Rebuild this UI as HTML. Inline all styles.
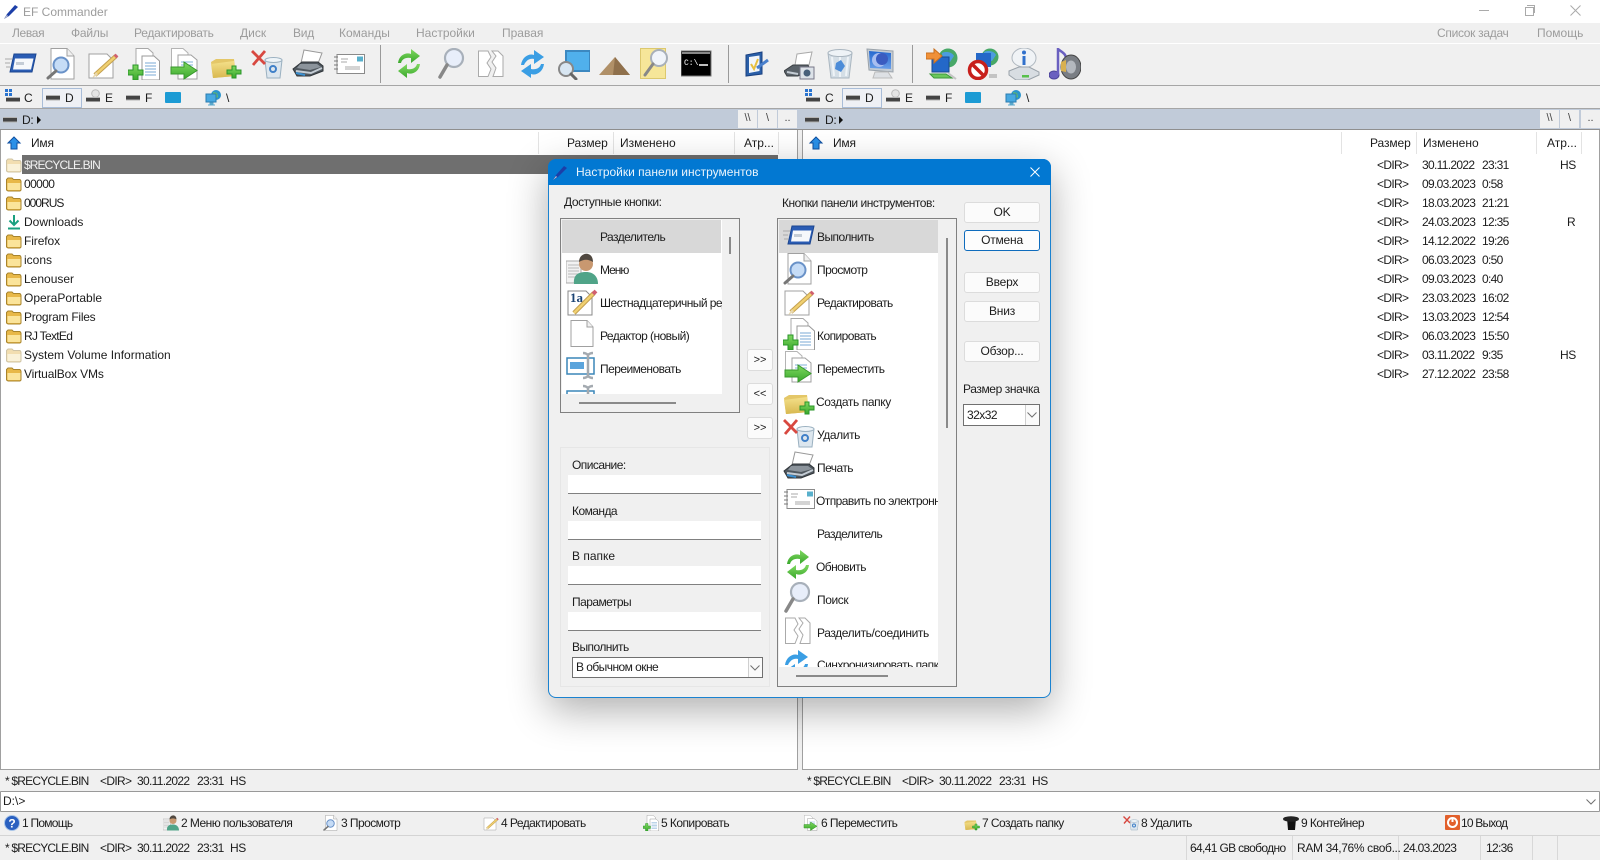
<!DOCTYPE html>
<html lang="ru"><head><meta charset="utf-8"><title>EF Commander</title>
<style>
html,body{margin:0;padding:0;background:#f0f0f0}
#r{position:relative;width:1600px;height:860px;overflow:hidden;background:#f0f0f0;font:12px/16px "Liberation Sans","Noto Sans CJK SC",sans-serif;color:#1c1c1c;filter:blur(.35px)}
.b{position:absolute}
.t{position:absolute;white-space:nowrap;line-height:16px}
svg.i{position:absolute;width:32px;height:32px;overflow:visible}
svg.s{position:absolute;width:16px;height:16px;overflow:visible}
.g{color:#9c9c9c}
.m{letter-spacing:-.55px}
.q{letter-spacing:-.68px}
.pb{position:absolute;top:110px;height:18px;background:#f0f0f0;text-align:center;line-height:17px;font-size:11px;color:#444}
.btn{position:absolute;left:964px;width:74px;height:19px;background:#fbfbfb;border:1px solid #dcdcdc;border-radius:3px;text-align:center;line-height:19px;letter-spacing:-.2px}
.ab{position:absolute;left:747px;width:24px;height:20px;background:#fbfbfb;border:1px solid #dcdcdc;border-radius:3px;text-align:center;line-height:21px;font-size:11px}
.in{position:absolute;left:568px;width:193px;height:18px;background:#fff;border-bottom:1px solid #808080}
.sep{position:absolute;top:132px;height:22px;width:1px;background:#e3e3e3}
</style></head><body>
<svg width="0" height="0" style="position:absolute">
<defs>
<linearGradient id="gr" x1="0" y1="0" x2="0" y2="1"><stop offset="0" stop-color="#7fd860"/><stop offset="1" stop-color="#3aa82c"/></linearGradient>
<linearGradient id="bl" x1="0" y1="0" x2="0" y2="1"><stop offset="0" stop-color="#2468d0"/><stop offset="1" stop-color="#6a9ee8"/></linearGradient>
<linearGradient id="gy" x1="0" y1="0" x2="0" y2="1"><stop offset="0" stop-color="#f4e08a"/><stop offset="1" stop-color="#d8b850"/></linearGradient>
<symbol id="run" viewBox="0 0 32 32"><path d="M0 11h7M0 15h5M1 19h4" stroke="#aaa" fill="none"/><path d="M9 6H31L27 24H5Z" fill="#2a5cb4" stroke="#1c4690"/><path d="M10 10.500h18.500l-2.500 11H8z" fill="#f6f8fb"/><path d="M11 14h8v3h-8z" fill="#c4ccd6"/></symbol>
<symbol id="view" viewBox="0 0 32 32"><path d="M5 .5H21L28 8V31H5Z" fill="#fff" stroke="#a0a0a0"/><path d="M21 .5V8H28" fill="#f0f0f0" stroke="#a0a0a0"/><circle cx="15" cy="17" r="7.500" fill="#c6dcf6" stroke="#6a92c8" stroke-width="2"/><path d="M10 23L2 30" stroke="#777" stroke-width="3" stroke-linecap="round"/></symbol>
<symbol id="edit" viewBox="0 0 32 32"><path d="M2 6H20L26 12V30H2Z" fill="#fff" stroke="#a0a0a0"/><path d="M8 27L29 8" stroke="#c4a050" stroke-width="4.500"/><path d="M8 27L29 8" stroke="#f0d070" stroke-width="2.500"/><path d="M9 24L11 27L5 30Z" fill="#e8d8b0"/><path d="M28 9L30 7" stroke="#d06070" stroke-width="4"/></symbol>
<symbol id="copy" viewBox="0 0 32 32"><path d="M8 .5H20L25 5V26H8Z" fill="#fff" stroke="#a8a8a8"/><path d="M14 8H26L31.500 13V32H14Z" fill="#fff" stroke="#999"/><path d="M17 15h11M17 18h11M17 21h11M17 24h11M17 27h11" stroke="#7aa8d4"/><path d="M5 17h5v5h5v5h-5v5H5v-5H0v-5h5z" fill="url(#gr)" stroke="#2a962a"/></symbol>
<symbol id="move" viewBox="0 0 32 32"><path d="M2.500 .5H14L19 5V24H2.500Z" fill="#fff" stroke="#b4b4b4"/><path d="M9 7H22L28 12V31H9Z" fill="#fff" stroke="#a0a0a0"/><path d="M12 14h12M12 17h12" stroke="#80b0d8"/><path d="M2 19H15V14L28 22.500L15 31V26H2Z" fill="url(#gr)" stroke="#38982c"/></symbol>
<symbol id="nf" viewBox="0 0 32 32"><path d="M1 14L6 11H24L26 28L3 30Z" fill="#e4c768"/><path d="M1 16L24 13L26 28L3 30Z" fill="url(#gy)"/><path d="M22 18h4v4h5v4h-5v4h-4v-4h-5v-4h5z" fill="url(#gr)" stroke="#2a962a"/></symbol>
<symbol id="del" viewBox="0 0 32 32"><path d="M14 12H31L29 30H16Z" fill="#dce6ee" stroke="#9ab0c0"/><ellipse cx="22.500" cy="12" rx="8.500" ry="2.500" fill="#eef4f8" stroke="#9ab0c0"/><circle cx="22" cy="21" r="3" fill="none" stroke="#4080c8" stroke-width="2"/><path d="M1 3L14 16M14 3L2 17" stroke="#d84840" stroke-width="2.800"/></symbol>
<symbol id="print" viewBox="0 0 32 32"><path d="M12 2L30 5L25 18L9 15Z" fill="#fff" stroke="#999"/><path d="M1 21L10 14H26L31 18V23L18 28H5Z" fill="#50585f" stroke="#303539"/><path d="M8 16H25L29 19L18 22L5 20Z" fill="#8c949c"/><path d="M4 23L19 25L30 20" stroke="#c4ccd4" fill="none" stroke-width="2"/><path d="M4 25L13 27" stroke="#3a8fd0" stroke-width="2"/></symbol>
<symbol id="mail" viewBox="0 0 32 32"><path d="M4 6.500h27.500v19H4z" fill="#fff" stroke="#8a8a8a"/><path d="M24 8.500h6v5h-6z" fill="#58b0cc"/><path d="M8 11h7M8 14h6M12 19h15M12 21h15" stroke="#aaa"/><path d="M1 9h4M1 13h4M1 17h4M1 21h4" stroke="#777"/></symbol>
<symbol id="ref" viewBox="0 0 32 32"><path d="M2 15C3 7 10 4 15 6V1L24 8L15 15V10C10 9 6 11 5 15Z" fill="url(#gr)"/><path d="M24 16C23 24 16 27 11 25V30L2 23L11 16V21C16 22 20 20 21 16Z" fill="url(#gr)"/></symbol>
<symbol id="sync" viewBox="0 0 32 32"><path d="M2 17C3 9 10 5 15 7V2L25 9L15 16V11C10 10 7 13 5 17Z" fill="#3a9ee4"/><path d="M25 16C24 24 17 28 12 26V30L2 23L12 16V21C17 22 21 20 22 16Z" fill="#3a9ee4"/></symbol>
<symbol id="find" viewBox="0 0 32 32"><circle cx="17" cy="10" r="9" fill="#e8eefa" stroke="#a8b0ba" stroke-width="2.200"/><path d="M10 17L3 29" stroke="#888" stroke-width="3.500" stroke-linecap="round"/></symbol>
<symbol id="split" viewBox="0 0 32 32"><path d="M.5 3H10L13 9L9 15L13 21L10 28.500H.5Z" fill="#fff" stroke="#aaa"/><path d="M14 3H20L25 8V28.500H15L18 20L14 14L18 8Z" fill="#fff" stroke="#aaa"/></symbol>
<symbol id="cmp" viewBox="0 0 32 32"><rect x="8" y="3" width="24" height="20" fill="#50b0ec" stroke="#3c88c0" stroke-width="2"/><circle cx="8" cy="21" r="7" fill="#d8e6f2" stroke="#888" stroke-width="2"/><path d="M13 26L18 31" stroke="#666" stroke-width="3" stroke-linecap="round"/></symbol>
<symbol id="pyr" viewBox="0 0 32 32"><path d="M16 9L31 27H0Z" fill="#b09068"/><path d="M16 9L31 27H14Z" fill="#8f704c"/></symbol>
<symbol id="ff" viewBox="0 0 32 32"><rect x=".5" y=".5" width="25" height="30" fill="#f6e699" stroke="#dcc86e"/><circle cx="19" cy="10" r="8" fill="#f0f4fa" stroke="#a8b0ba" stroke-width="2"/><path d="M13 16L5 27" stroke="#888" stroke-width="3" stroke-linecap="round"/></symbol>
<symbol id="cm" viewBox="0 0 32 32"><rect x="0" y="3" width="30" height="25" fill="#000" stroke="#777"/><path d="M1 5h28" stroke="#888" stroke-width="2"/><text x="3" y="17" font-family="Liberation Mono,monospace" font-size="8" fill="#fff">C:\</text><path d="M18 17h9" stroke="#fff" stroke-width="1.500"/></symbol>
<symbol id="task" viewBox="0 0 32 32"><path d="M3 7L19 4V26L3 28Z" fill="#2a5fa8" stroke="#1a4080"/><path d="M6 9L16.500 7.500V23L6 25Z" fill="#f2f6fb"/><path d="M8 16L11 21L15 11" stroke="#e8c040" stroke-width="2" fill="none"/><path d="M14 20L25 12" stroke="#4a80cc" stroke-width="3"/></symbol>
<symbol id="pc" viewBox="0 0 32 32"><path d="M13 6L28 4L25 17L11 17Z" fill="#fff" stroke="#aaa"/><path d="M0 23L9 17H24L26 22L14 28H3Z" fill="#5a6269" stroke="#3a3f43"/><path d="M3 24L14 26" stroke="#c4ccd4" stroke-width="2"/><rect x="16" y="19" width="14" height="12" fill="#dce2e8" stroke="#778"/><circle cx="23" cy="25" r="3.500" fill="#48607a"/></symbol>
<symbol id="rec" viewBox="0 0 32 32"><path d="M3 5H27L24 30H6Z" fill="#d4dee6" stroke="#aab6c0"/><ellipse cx="15" cy="5" rx="12" ry="3.500" fill="#eef3f7" stroke="#aab6c0"/><path d="M7 9L9 28M15 9V29M23 9L21 28" stroke="#eef3f7" stroke-width="2"/><path d="M11 15L16 12L20 18L16 24L10 21Z" fill="#4c8cd8"/></symbol>
<symbol id="mon" viewBox="0 0 32 32"><path d="M1 1L27 3V24L3 22Z" fill="#c4ccd4" stroke="#9aa2aa"/><path d="M3 3L25 5V21L4 20Z" fill="url(#bl)"/><circle cx="13" cy="12" r="7" fill="#a8bef0"/><circle cx="16" cy="11" r="6" fill="#3a5cc0"/><path d="M9 24H22L26 30H7Z" fill="#dde0e4" stroke="#bbb"/></symbol>
<symbol id="net1" viewBox="0 0 32 32"><circle cx="22" cy="10" r="9.500" fill="#48a868"/><path d="M16 5C20 3 26 4 28 8L24 14L17 13Z" fill="#4c9ce0"/><rect x="6" y="9" width="17" height="15" fill="#2468c8" stroke="#184a90"/><path d="M0 5H8V1L16 8L8 15V11H0Z" fill="#f09038" stroke="#c87020"/><path d="M4 26H20L26 30H8Z" fill="#6cc85c" stroke="#3c983c"/><path d="M22 25L30 31" stroke="#c4c4c4" stroke-width="2"/></symbol>
<symbol id="nonet" viewBox="0 0 32 32"><circle cx="23" cy="9" r="8.500" fill="#48a868"/><path d="M17 4C21 2 27 3 29 7L25 13L18 12Z" fill="#4c9ce0"/><rect x="9" y="5" width="15" height="14" fill="#2468c8"/><circle cx="11" cy="22" r="8.500" fill="#fff" stroke="#c8201c" stroke-width="3.500"/><path d="M5 16L17 28" stroke="#c8201c" stroke-width="3.500"/><path d="M22 26h8v4h-8z" fill="#c4c4c4"/></symbol>
<symbol id="info" viewBox="0 0 32 32"><path d="M16 0C22 0 28 4 28 10C28 16 22 19 20 19L16 24L14 19C9 18 4 15 4 10C4 4 10 0 16 0Z" fill="#f0f3f6" stroke="#b0b8c0"/><circle cx="16" cy="4.500" r="2" fill="#3070cc"/><path d="M16 8v9" stroke="#3070cc" stroke-width="3"/><path d="M1 23L11 19H21L31 24V27L20 32H8L1 27Z" fill="#d8dde2" stroke="#9aa2aa"/><rect x="14" y="27" width="7" height="2.500" fill="#58c04c"/></symbol>
<symbol id="mus" viewBox="0 0 32 32"><ellipse cx="5" cy="27" rx="5" ry="4" fill="#6a60c0" stroke="#4a4298"/><path d="M9 27V1C12 4 18 5 17 13" fill="none" stroke="#6a60c0" stroke-width="2.500"/><ellipse cx="22" cy="19" rx="10" ry="12" fill="#7a7e84" stroke="#444"/><ellipse cx="22" cy="19" rx="5" ry="6.500" fill="#b4b8be"/><path d="M12 14L17 12L17 24L12 23Z" fill="#d8b050"/></symbol>
<symbol id="usr" viewBox="0 0 32 32"><path d="M0 8H15V30H0Z" fill="#f2f2f2" stroke="#aaa"/><path d="M2 12h11M2 15h11M2 18h11M2 21h11M2 24h11" stroke="#bbb"/><path d="M8 31C7 22 12 19 20 19C28 19 32 24 32 31Z" fill="#50a488"/><circle cx="20" cy="11" r="7" fill="#c89870"/><path d="M13 9C13 3 18 0 22 1C26 2 27 6 27 9C22 6 18 6 13 9Z" fill="#504840"/></symbol>
<symbol id="hex" viewBox="0 0 32 32"><path d="M2 6H20L26 12V30H2Z" fill="#fff" stroke="#888"/><text x="4" y="17" font-family="Liberation Serif,serif" font-weight="700" font-size="13" fill="#1c4474">1a</text><path d="M8 28L28 8" stroke="#c4a050" stroke-width="4.500"/><path d="M8 28L28 8" stroke="#f0d070" stroke-width="2.500"/><path d="M27 9L30 6" stroke="#d06070" stroke-width="4"/></symbol>
<symbol id="nd" viewBox="0 0 32 32"><path d="M5 2.500H21L27 9V28.500H5Z" fill="#fff" stroke="#a0a0a0"/><path d="M21 2.500V9H27" fill="#f2f2f2" stroke="#a0a0a0"/></symbol>
<symbol id="ren" viewBox="0 0 32 32"><rect x="1" y="7" width="27" height="16" fill="#fff" stroke="#3a86b8" stroke-width="1.500"/><rect x="4" y="11" width="14" height="7" fill="#5aa4dc"/><path d="M17 2c3 0 4 1 5 2c1-1 2-2 5-2M22 3V26M17 27c3 0 4-1 5-2c1 1 2 2 5 2" stroke="#a4aab0" stroke-width="2.500" fill="none"/></symbol>
<symbol id="fo" viewBox="0 0 16 16"><path d="M.5 3.500L2 2H6L7.500 3.500H14L15 5V14L14 15H2L.5 14Z" fill="#e8b848" stroke="#a8842c"/><path d="M1.500 7H14.500V13.500L14 14H2L1.500 13.500Z" fill="#fbe49a"/></symbol>
<symbol id="fp" viewBox="0 0 16 16"><path d="M.5 3.500L2 2H6L7.500 3.500H14L15 5V14L14 15H2L.5 14Z" fill="#f2deb0" stroke="#cfc4a6"/><path d="M1.500 7H14.500V13.500L14 14H2L1.500 13.500Z" fill="#faf2d8"/></symbol>
<symbol id="dl" viewBox="0 0 16 16"><path d="M8 1V11M3.500 6.500L8 11L12.500 6.500" stroke="#1aa080" stroke-width="2" fill="none"/><path d="M2 14.500H14" stroke="#1aa080" stroke-width="2"/></symbol>
<symbol id="up" viewBox="0 0 16 16"><path d="M8 2L14 8H11V14H5V8H2Z" fill="#2a90e8" stroke="#0f4fa0"/></symbol>
<symbol id="d" viewBox="0 0 16 16"><rect x="1" y="7" width="14" height="3.500" fill="#444"/><path d="M1 6.500h14M1 11h14" stroke="#b4b4b4"/></symbol>
<symbol id="dc" viewBox="0 0 16 16"><rect x="1" y="9" width="14" height="3.500" fill="#444"/><path d="M1 8.500h14" stroke="#b4b4b4"/><path d="M0 0h3v3H0zM4 0h3v3H4zM0 4h3v3H0zM4 4h3v3H4z" fill="#2a74d0"/></symbol>
<symbol id="de" viewBox="0 0 16 16"><rect x="1" y="9" width="14" height="3.500" fill="#444"/><path d="M1 8.500h14" stroke="#b4b4b4"/><circle cx="10.500" cy="4.500" r="3.800" fill="#e4e4e4" stroke="#bbb"/></symbol>
<symbol id="nt" viewBox="0 0 16 16"><circle cx="11" cy="5" r="5" fill="#2a94cc"/><path d="M8 2l4 1l1 4l-3 2z" fill="#68c068"/><rect x="1" y="4" width="10" height="8" fill="#48a8e0" stroke="#2a7cb0"/><path d="M5 13h3v1H5zM3 15h7" stroke="#5aa8cc"/></symbol>
<symbol id="hl" viewBox="0 0 16 16"><circle cx="8" cy="8" r="7.500" fill="#2a60c0" stroke="#a8c4e8"/><text x="8" y="12.500" text-anchor="middle" font-family="Liberation Sans,sans-serif" font-weight="700" font-size="12" fill="#fff">?</text></symbol>
<symbol id="hat" viewBox="0 0 16 16"><path d="M4 3H13L12 15H5Z" fill="#111"/><ellipse cx="8" cy="4" rx="8" ry="2.800" fill="#222"/></symbol>
<symbol id="pw" viewBox="0 0 16 16"><rect width="15" height="15" rx="1" fill="#e2602c"/><circle cx="7.500" cy="7.500" r="4.500" fill="none" stroke="#fff" stroke-width="2"/><path d="M7.500 3v4" stroke="#fff" stroke-width="2"/></symbol>
<symbol id="pen" viewBox="0 0 16 16"><path d="M1 15L4 10L12 1L15 3L6 12Z" fill="#1c3fa8"/><path d="M1 15L4 11L5 12Z" fill="#c8c8d0"/></symbol>
<symbol id="chev" viewBox="0 0 10 6"><path d="M.5 .5L5 5L9.500 .5" fill="none" stroke="#707070"/></symbol>
</defs></svg>

<div id="r">
<!-- title -->
<div class="b" style="left:0;top:0;width:1600px;height:23px;background:#fff"></div>
<svg class="s" style="left:3px;top:4px"><use href="#pen"/></svg>
<div class="t g" style="left:23px;top:4px">EF Commander</div>
<div class="b" style="left:1479px;top:10px;width:10px;height:1px;background:#aaa"></div>
<div class="b" style="left:1525px;top:7px;width:7px;height:7px;border:1px solid #aaa"></div>
<div class="b" style="left:1527px;top:5px;width:7px;height:7px;border-top:1px solid #aaa;border-right:1px solid #aaa"></div>
<svg class="b" style="left:1570px;top:5px;width:11px;height:11px"><path d="M.5 .5L10.500 10.500M10.500 .5L.5 10.500" stroke="#aaa"/></svg>
<!-- menu -->
<div class="t g" style="left:12px;top:25px;letter-spacing:-.35px">Левая</div>
<div class="t g" style="left:71px;top:25px;letter-spacing:-.2px">Файлы</div>
<div class="t g" style="left:134px;top:25px;letter-spacing:-.25px">Редактировать</div>
<div class="t g" style="left:240px;top:25px">Диск</div>
<div class="t g" style="left:293px;top:25px;letter-spacing:-.2px">Вид</div>
<div class="t g" style="left:339px;top:25px">Команды</div>
<div class="t g" style="left:416px;top:25px">Настройки</div>
<div class="t g" style="left:502px;top:25px">Правая</div>
<div class="t g" style="left:1437px;top:25px;letter-spacing:-.3px">Список задач</div>
<div class="t g" style="left:1537px;top:25px">Помощь</div>
<div class="b" style="left:0;top:43px;width:1600px;height:1px;background:#fff"></div>
<div class="b" style="left:0;top:85px;width:1600px;height:1px;background:#a6a6a6"></div>
<div class="b" style="left:0;top:108px;width:1600px;height:1px;background:#a6a6a6"></div>
<!-- toolbar -->
<svg class="i" style="left:5px;top:48px"><use href="#run"/></svg>
<svg class="i" style="left:46px;top:48px"><use href="#view"/></svg>
<svg class="i" style="left:87px;top:48px"><use href="#edit"/></svg>
<svg class="i" style="left:128px;top:48px"><use href="#copy"/></svg>
<svg class="i" style="left:169px;top:48px"><use href="#move"/></svg>
<svg class="i" style="left:210px;top:48px"><use href="#nf"/></svg>
<svg class="i" style="left:251px;top:48px"><use href="#del"/></svg>
<svg class="i" style="left:292px;top:48px"><use href="#print"/></svg>
<svg class="i" style="left:333px;top:48px"><use href="#mail"/></svg>
<div class="b" style="left:380px;top:45px;width:1px;height:38px;background:#9a9a9a"></div>
<svg class="i" style="left:396px;top:48px"><use href="#ref"/></svg>
<svg class="i" style="left:437px;top:48px"><use href="#find"/></svg>
<svg class="i" style="left:478px;top:48px"><use href="#split"/></svg>
<svg class="i" style="left:519px;top:48px"><use href="#sync"/></svg>
<svg class="i" style="left:558px;top:48px"><use href="#cmp"/></svg>
<svg class="i" style="left:599px;top:48px"><use href="#pyr"/></svg>
<svg class="i" style="left:640px;top:48px"><use href="#ff"/></svg>
<svg class="i" style="left:681px;top:48px"><use href="#cm"/></svg>
<div class="b" style="left:728px;top:45px;width:1px;height:38px;background:#9a9a9a"></div>
<svg class="i" style="left:743px;top:48px"><use href="#task"/></svg>
<svg class="i" style="left:784px;top:48px"><use href="#pc"/></svg>
<svg class="i" style="left:825px;top:48px"><use href="#rec"/></svg>
<svg class="i" style="left:866px;top:48px"><use href="#mon"/></svg>
<div class="b" style="left:912px;top:45px;width:1px;height:38px;background:#9a9a9a"></div>
<svg class="i" style="left:926px;top:48px"><use href="#net1"/></svg>
<svg class="i" style="left:967px;top:48px"><use href="#nonet"/></svg>
<svg class="i" style="left:1008px;top:48px"><use href="#info"/></svg>
<svg class="i" style="left:1049px;top:48px"><use href="#mus"/></svg>
<!-- drives left -->
<svg class="s" style="left:5px;top:89px"><use href="#dc"/></svg><div class="t" style="left:24px;top:90px">C</div>
<div class="b" style="left:42px;top:88px;width:38px;height:18px;border:1px solid #a9bdd8;background:#eef0f5"></div>
<svg class="s" style="left:45px;top:89px"><use href="#d"/></svg><div class="t" style="left:65px;top:90px">D</div>
<svg class="s" style="left:85px;top:89px"><use href="#de"/></svg><div class="t" style="left:105px;top:90px">E</div>
<svg class="s" style="left:125px;top:89px"><use href="#d"/></svg><div class="t" style="left:145px;top:90px">F</div>
<div class="b" style="left:165px;top:92px;width:16px;height:11px;background:#1c9bd4;border-radius:1px"></div>
<svg class="s" style="left:205px;top:90px"><use href="#nt"/></svg><div class="t" style="left:226px;top:90px">\</div>
<!-- drives right -->
<svg class="s" style="left:805px;top:89px"><use href="#dc"/></svg><div class="t" style="left:825px;top:90px">C</div>
<div class="b" style="left:842px;top:88px;width:38px;height:18px;border:1px solid #a9bdd8;background:#eef0f5"></div>
<svg class="s" style="left:845px;top:89px"><use href="#d"/></svg><div class="t" style="left:865px;top:90px">D</div>
<svg class="s" style="left:885px;top:89px"><use href="#de"/></svg><div class="t" style="left:905px;top:90px">E</div>
<svg class="s" style="left:925px;top:89px"><use href="#d"/></svg><div class="t" style="left:945px;top:90px">F</div>
<div class="b" style="left:965px;top:92px;width:16px;height:11px;background:#1c9bd4;border-radius:1px"></div>
<svg class="s" style="left:1005px;top:90px"><use href="#nt"/></svg><div class="t" style="left:1026px;top:90px">\</div>
<!-- path bars -->
<div class="b" style="left:0;top:109px;width:1600px;height:20px;background:#c1cbd9"></div>
<div class="b" style="left:0;top:129px;width:1600px;height:1px;background:#8f8f8f"></div>
<svg class="s" style="left:2px;top:111px"><use href="#d"/></svg>
<div class="t" style="left:22px;top:112px;letter-spacing:-.3px">D:</div>
<div class="b" style="left:37px;top:116px;border-left:4px solid #111;border-top:4px solid transparent;border-bottom:4px solid transparent"></div>
<div class="pb" style="left:738px;width:19px">\\</div><div class="pb" style="left:758px;width:19px">\</div><div class="pb" style="left:778px;width:19px">..</div>
<svg class="s" style="left:804px;top:111px"><use href="#d"/></svg>
<div class="t" style="left:825px;top:112px;letter-spacing:-.3px">D:</div>
<div class="b" style="left:839px;top:116px;border-left:4px solid #111;border-top:4px solid transparent;border-bottom:4px solid transparent"></div>
<div class="pb" style="left:1540px;width:19px">\\</div><div class="pb" style="left:1560px;width:19px">\</div><div class="pb" style="left:1581px;width:19px">..</div>
<!-- lists -->
<div class="b" style="left:0;top:130px;width:796px;height:639px;background:#fff;border-left:1px solid #a0a0a0;border-right:1px solid #a0a0a0;border-bottom:1px solid #a0a0a0"></div>
<div class="b" style="left:802px;top:130px;width:796px;height:639px;background:#fff;border-left:1px solid #a0a0a0;border-right:1px solid #a0a0a0;border-bottom:1px solid #a0a0a0"></div>
<svg class="s" style="left:6px;top:135px"><use href="#up"/></svg>
<div class="t" style="left:31px;top:135px;letter-spacing:-.2px">Имя</div>
<div class="sep" style="left:538px"></div>
<div class="t" style="left:567px;top:135px;letter-spacing:-.1px">Размер</div>
<div class="sep" style="left:613px"></div>
<div class="t" style="left:620px;top:135px">Изменено</div>
<div class="sep" style="left:734px"></div>
<div class="t" style="left:744px;top:135px">Атр...</div>
<div class="sep" style="left:778px"></div>
<svg class="s" style="left:808px;top:135px"><use href="#up"/></svg>
<div class="t" style="left:833px;top:135px;letter-spacing:-.2px">Имя</div>
<div class="sep" style="left:1341px"></div>
<div class="t" style="left:1370px;top:135px;letter-spacing:-.1px">Размер</div>
<div class="sep" style="left:1416px"></div>
<div class="t" style="left:1423px;top:135px">Изменено</div>
<div class="sep" style="left:1536px"></div>
<div class="t" style="left:1547px;top:135px">Атр...</div>
<div class="sep" style="left:1581px"></div>
<!-- left rows -->
<div class="b" style="left:22px;top:155px;width:756px;height:19px;background:#6f6f6f"></div>
<svg class="s" style="left:6px;top:157px"><use href="#fp"/></svg><div class="t" style="left:24px;top:157px;color:#f2f2f2;letter-spacing:-.9px">$RECYCLE.BIN</div>
<svg class="s" style="left:6px;top:176px"><use href="#fo"/></svg><div class="t" style="left:24px;top:176px;letter-spacing:-.6px">00000</div>
<svg class="s" style="left:6px;top:195px"><use href="#fo"/></svg><div class="t" style="left:24px;top:195px;letter-spacing:-1px">000RUS</div>
<svg class="s" style="left:6px;top:214px"><use href="#dl"/></svg><div class="t" style="left:24px;top:214px">Downloads</div>
<svg class="s" style="left:6px;top:233px"><use href="#fo"/></svg><div class="t" style="left:24px;top:233px;letter-spacing:-.1px">Firefox</div>
<svg class="s" style="left:6px;top:252px"><use href="#fo"/></svg><div class="t" style="left:24px;top:252px">icons</div>
<svg class="s" style="left:6px;top:271px"><use href="#fo"/></svg><div class="t" style="left:24px;top:271px">Lenouser</div>
<svg class="s" style="left:6px;top:290px"><use href="#fo"/></svg><div class="t" style="left:24px;top:290px">OperaPortable</div>
<svg class="s" style="left:6px;top:309px"><use href="#fo"/></svg><div class="t" style="left:24px;top:309px;letter-spacing:-.25px">Program Files</div>
<svg class="s" style="left:6px;top:328px"><use href="#fo"/></svg><div class="t" style="left:24px;top:328px;letter-spacing:-.7px">RJ TextEd</div>
<svg class="s" style="left:6px;top:347px"><use href="#fp"/></svg><div class="t" style="left:24px;top:347px">System Volume Information</div>
<svg class="s" style="left:6px;top:366px"><use href="#fo"/></svg><div class="t" style="left:24px;top:366px;letter-spacing:-.15px">VirtualBox VMs</div>
<!-- right rows -->
<div class="t q" style="left:1377px;top:157px">&lt;DIR&gt;</div><div class="t q" style="left:1422px;top:157px">30.11.2022</div><div class="t q" style="left:1482px;top:157px">23:31</div><div class="t" style="left:1560px;top:157px;letter-spacing:-.4px">HS</div>
<div class="t q" style="left:1377px;top:176px">&lt;DIR&gt;</div><div class="t q" style="left:1422px;top:176px">09.03.2023</div><div class="t q" style="left:1482px;top:176px">0:58</div>
<div class="t q" style="left:1377px;top:195px">&lt;DIR&gt;</div><div class="t q" style="left:1422px;top:195px">18.03.2023</div><div class="t q" style="left:1482px;top:195px">21:21</div>
<div class="t q" style="left:1377px;top:214px">&lt;DIR&gt;</div><div class="t q" style="left:1422px;top:214px">24.03.2023</div><div class="t q" style="left:1482px;top:214px">12:35</div><div class="t" style="left:1567px;top:214px">R</div>
<div class="t q" style="left:1377px;top:233px">&lt;DIR&gt;</div><div class="t q" style="left:1422px;top:233px">14.12.2022</div><div class="t q" style="left:1482px;top:233px">19:26</div>
<div class="t q" style="left:1377px;top:252px">&lt;DIR&gt;</div><div class="t q" style="left:1422px;top:252px">06.03.2023</div><div class="t q" style="left:1482px;top:252px">0:50</div>
<div class="t q" style="left:1377px;top:271px">&lt;DIR&gt;</div><div class="t q" style="left:1422px;top:271px">09.03.2023</div><div class="t q" style="left:1482px;top:271px">0:40</div>
<div class="t q" style="left:1377px;top:290px">&lt;DIR&gt;</div><div class="t q" style="left:1422px;top:290px">23.03.2023</div><div class="t q" style="left:1482px;top:290px">16:02</div>
<div class="t q" style="left:1377px;top:309px">&lt;DIR&gt;</div><div class="t q" style="left:1422px;top:309px">13.03.2023</div><div class="t q" style="left:1482px;top:309px">12:54</div>
<div class="t q" style="left:1377px;top:328px">&lt;DIR&gt;</div><div class="t q" style="left:1422px;top:328px">06.03.2023</div><div class="t q" style="left:1482px;top:328px">15:50</div>
<div class="t q" style="left:1377px;top:347px">&lt;DIR&gt;</div><div class="t q" style="left:1422px;top:347px">03.11.2022</div><div class="t q" style="left:1482px;top:347px">9:35</div><div class="t" style="left:1560px;top:347px;letter-spacing:-.4px">HS</div>
<div class="t q" style="left:1377px;top:366px">&lt;DIR&gt;</div><div class="t q" style="left:1422px;top:366px">27.12.2022</div><div class="t q" style="left:1482px;top:366px">23:58</div>
<!-- status -->
<div class="t" style="left:5px;top:773px;letter-spacing:-.8px">* $RECYCLE.BIN</div><div class="t q" style="left:100px;top:773px">&lt;DIR&gt;</div><div class="t q" style="left:137px;top:773px">30.11.2022</div><div class="t q" style="left:197px;top:773px">23:31</div><div class="t" style="left:230px;top:773px;letter-spacing:-.4px">HS</div>
<div class="t" style="left:807px;top:773px;letter-spacing:-.8px">* $RECYCLE.BIN</div><div class="t q" style="left:902px;top:773px">&lt;DIR&gt;</div><div class="t q" style="left:939px;top:773px">30.11.2022</div><div class="t q" style="left:999px;top:773px">23:31</div><div class="t" style="left:1032px;top:773px;letter-spacing:-.4px">HS</div>
<div class="b" style="left:0;top:791px;width:1598px;height:19px;background:#fff;border:1px solid #999;border-radius:1px"></div>
<div class="t" style="left:3px;top:793px">D:\&gt;</div>
<svg class="b" style="left:1586px;top:799px;width:10px;height:6px"><use href="#chev"/></svg>
<!-- fkeys -->
<svg class="s" style="left:4px;top:815px"><use href="#hl"/></svg><div class="t m" style="left:22px;top:815px;letter-spacing:-.75px">1 Помощь</div>
<svg class="s" style="left:163px;top:815px"><use href="#usr"/></svg><div class="t m" style="left:181px;top:815px">2 Меню пользователя</div>
<svg class="s" style="left:323px;top:815px"><use href="#view"/></svg><div class="t m" style="left:341px;top:815px">3 Просмотр</div>
<svg class="s" style="left:483px;top:815px"><use href="#edit"/></svg><div class="t m" style="left:501px;top:815px">4 Редактировать</div>
<svg class="s" style="left:643px;top:815px"><use href="#copy"/></svg><div class="t m" style="left:661px;top:815px">5 Копировать</div>
<svg class="s" style="left:803px;top:815px"><use href="#move"/></svg><div class="t m" style="left:821px;top:815px">6 Переместить</div>
<svg class="s" style="left:964px;top:815px"><use href="#nf"/></svg><div class="t m" style="left:982px;top:815px">7 Создать папку</div>
<svg class="s" style="left:1123px;top:815px"><use href="#del"/></svg><div class="t m" style="left:1141px;top:815px">8 Удалить</div>
<svg class="s" style="left:1283px;top:815px"><use href="#hat"/></svg><div class="t m" style="left:1301px;top:815px">9 Контейнер</div>
<svg class="s" style="left:1445px;top:815px"><use href="#pw"/></svg><div class="t" style="left:1461px;top:815px;letter-spacing:-.8px">10 Выход</div>
<div class="b" style="left:0;top:835px;width:1600px;height:1px;background:#d4d4d4"></div>
<!-- statusbar -->
<div class="t" style="left:5px;top:840px;letter-spacing:-.8px">* $RECYCLE.BIN</div><div class="t q" style="left:100px;top:840px">&lt;DIR&gt;</div><div class="t q" style="left:137px;top:840px">30.11.2022</div><div class="t q" style="left:197px;top:840px">23:31</div><div class="t" style="left:230px;top:840px;letter-spacing:-.4px">HS</div>
<div class="b" style="left:1186px;top:836px;width:1px;height:24px;background:#d8d8d8"></div>
<div class="b" style="left:1292px;top:836px;width:1px;height:24px;background:#d8d8d8"></div>
<div class="b" style="left:1398px;top:836px;width:1px;height:24px;background:#d8d8d8"></div>
<div class="b" style="left:1480px;top:836px;width:1px;height:24px;background:#d8d8d8"></div>
<div class="b" style="left:1532px;top:836px;width:1px;height:24px;background:#d8d8d8"></div>
<div class="b" style="left:1557px;top:836px;width:1px;height:24px;background:#d8d8d8"></div>
<div class="t" style="left:1190px;top:840px;letter-spacing:-.65px">64,41 GB свободно</div>
<div class="t" style="left:1297px;top:840px;letter-spacing:-.35px">RAM 34,76% своб...</div>
<div class="t q" style="left:1403px;top:840px">24.03.2023</div>
<div class="t q" style="left:1486px;top:840px">12:36</div>

<!-- dialog -->
<div class="b" style="left:548px;top:159px;width:501px;height:537px;background:#f0f0f0;border:1px solid #1a82d0;border-radius:8px;box-shadow:0 12px 40px rgba(0,0,0,.32)"></div>
<div class="b" style="left:548px;top:159px;width:503px;height:26px;background:#0278d2;border-radius:8px 8px 0 0"></div>
<svg class="s" style="left:552px;top:165px"><use href="#pen"/></svg>
<div class="t" style="left:576px;top:164px;color:#eaf4fc">Настройки панели инструментов</div>
<svg class="b" style="left:1030px;top:167px;width:10px;height:10px"><path d="M.5 .5L9.500 9.500M9.500 .5L.5 9.500" stroke="#fff"/></svg>
<div class="t" style="left:564px;top:194px;letter-spacing:-.42px">Доступные кнопки:</div>
<div class="t" style="left:782px;top:195px;letter-spacing:-.48px">Кнопки панели инструментов:</div>
<!-- left list -->
<div class="b" style="left:560px;top:218px;width:178px;height:193px;border:1px solid #808080;background:#f0f0f0"></div>
<div class="b" style="left:562px;top:220px;width:160px;height:174px;background:#fff;overflow:hidden">
 <div class="b" style="left:0;top:0;width:159px;height:33px;background:#d8d8d8"></div>
 <div class="t m" style="left:38px;top:9px">Разделитель</div>
 <svg class="i" style="left:4px;top:33px"><use href="#usr"/></svg><div class="t" style="left:38px;top:42px;letter-spacing:-1px">Меню</div>
 <svg class="i" style="left:4px;top:65px"><use href="#hex"/></svg><div class="t m" style="left:38px;top:75px">Шестнадцатеричный редактор</div>
 <svg class="i" style="left:4px;top:98px"><use href="#nd"/></svg><div class="t m" style="left:38px;top:108px">Редактор (новый)</div>
 <svg class="i" style="left:4px;top:131px"><use href="#ren"/></svg><div class="t m" style="left:38px;top:141px">Переименовать</div>
 <svg class="i" style="left:4px;top:164px"><use href="#ren"/></svg>
</div>
<div class="b" style="left:729px;top:237px;width:2px;height:17px;background:#8a8a8a"></div>
<div class="b" style="left:579px;top:402px;width:97px;height:2px;background:#8a8a8a"></div>
<!-- arrows -->
<div class="ab" style="top:349px">&gt;&gt;</div>
<div class="ab" style="top:383px">&lt;&lt;</div>
<div class="ab" style="top:417px">&gt;&gt;</div>
<!-- group -->
<div class="b" style="left:560px;top:447px;width:208px;height:238px;border:1px solid #e6e6e6"></div>
<div class="t m" style="left:572px;top:457px">Описание:</div><div class="in" style="top:475px"></div>
<div class="t m" style="left:572px;top:503px">Команда</div><div class="in" style="top:521px"></div>
<div class="t" style="left:572px;top:548px">В папке</div><div class="in" style="top:566px"></div>
<div class="t m" style="left:572px;top:594px">Параметры</div><div class="in" style="top:612px"></div>
<div class="t m" style="left:572px;top:639px">Выполнить</div>
<div class="b" style="left:572px;top:657px;width:189px;height:19px;background:#fff;border:1px solid #707070"></div>
<div class="t m" style="left:576px;top:659px">В обычном окне</div>
<div class="b" style="left:748px;top:658px;width:13px;height:19px;border-left:1px solid #cfcfcf;background:#fafafa"></div>
<svg class="b" style="left:750px;top:665px;width:10px;height:6px"><use href="#chev"/></svg>
<!-- right list -->
<div class="b" style="left:777px;top:218px;width:178px;height:467px;border:1px solid #808080;background:#f0f0f0"></div>
<div class="b" style="left:779px;top:220px;width:159px;height:447px;background:#fff;overflow:hidden">
 <div class="b" style="left:0;top:0;width:159px;height:33px;background:#d8d8d8"></div>
 <svg class="i" style="left:4px;top:0"><use href="#run"/></svg><div class="t m" style="left:38px;top:9px">Выполнить</div>
 <svg class="i" style="left:4px;top:33px"><use href="#view"/></svg><div class="t m" style="left:38px;top:42px">Просмотр</div>
 <svg class="i" style="left:4px;top:65px"><use href="#edit"/></svg><div class="t m" style="left:38px;top:75px">Редактировать</div>
 <svg class="i" style="left:4px;top:98px"><use href="#copy"/></svg><div class="t m" style="left:38px;top:108px">Копировать</div>
 <svg class="i" style="left:4px;top:131px"><use href="#move"/></svg><div class="t m" style="left:38px;top:141px">Переместить</div>
 <svg class="i" style="left:4px;top:164px"><use href="#nf"/></svg><div class="t" style="left:37px;top:174px;letter-spacing:-.4px">Создать папку</div>
 <svg class="i" style="left:4px;top:197px"><use href="#del"/></svg><div class="t" style="left:38px;top:207px;letter-spacing:-.4px">Удалить</div>
 <svg class="i" style="left:4px;top:230px"><use href="#print"/></svg><div class="t m" style="left:38px;top:240px">Печать</div>
 <svg class="i" style="left:4px;top:263px"><use href="#mail"/></svg><div class="t m" style="left:37px;top:273px">Отправить по электронной почте</div>
 <div class="t m" style="left:38px;top:306px">Разделитель</div>
 <svg class="i" style="left:6px;top:329px"><use href="#ref"/></svg><div class="t m" style="left:37px;top:339px">Обновить</div>
 <svg class="i" style="left:4px;top:362px"><use href="#find"/></svg><div class="t" style="left:38px;top:372px;letter-spacing:-.4px">Поиск</div>
 <svg class="i" style="left:6px;top:395px"><use href="#split"/></svg><div class="t" style="left:38px;top:405px;letter-spacing:-.4px">Разделить/соединить</div>
 <svg class="i" style="left:4px;top:428px"><use href="#sync"/></svg><div class="t m" style="left:38px;top:437px">Синхронизировать папки</div>
</div>
<div class="b" style="left:946px;top:238px;width:2px;height:190px;background:#8a8a8a"></div>
<div class="b" style="left:796px;top:675px;width:92px;height:2px;background:#8a8a8a"></div>
<!-- buttons -->
<div class="btn" style="top:202px">OK</div>
<div class="btn" style="top:230px;border-color:#0f6cbd;background:#fdfdfd">Отмена</div>
<div class="btn" style="top:272px">Вверх</div>
<div class="btn" style="top:301px">Вниз</div>
<div class="btn" style="top:341px">Обзор...</div>
<div class="t" style="left:963px;top:381px;letter-spacing:-.4px">Размер значка</div>
<div class="b" style="left:963px;top:404px;width:75px;height:20px;background:#fff;border:1px solid #707070"></div>
<div class="t m" style="left:967px;top:407px">32x32</div>
<div class="b" style="left:1025px;top:405px;width:13px;height:20px;border-left:1px solid #cfcfcf;background:#fafafa"></div>
<svg class="b" style="left:1027px;top:412px;width:10px;height:6px"><use href="#chev"/></svg>
</div>
</body></html>
